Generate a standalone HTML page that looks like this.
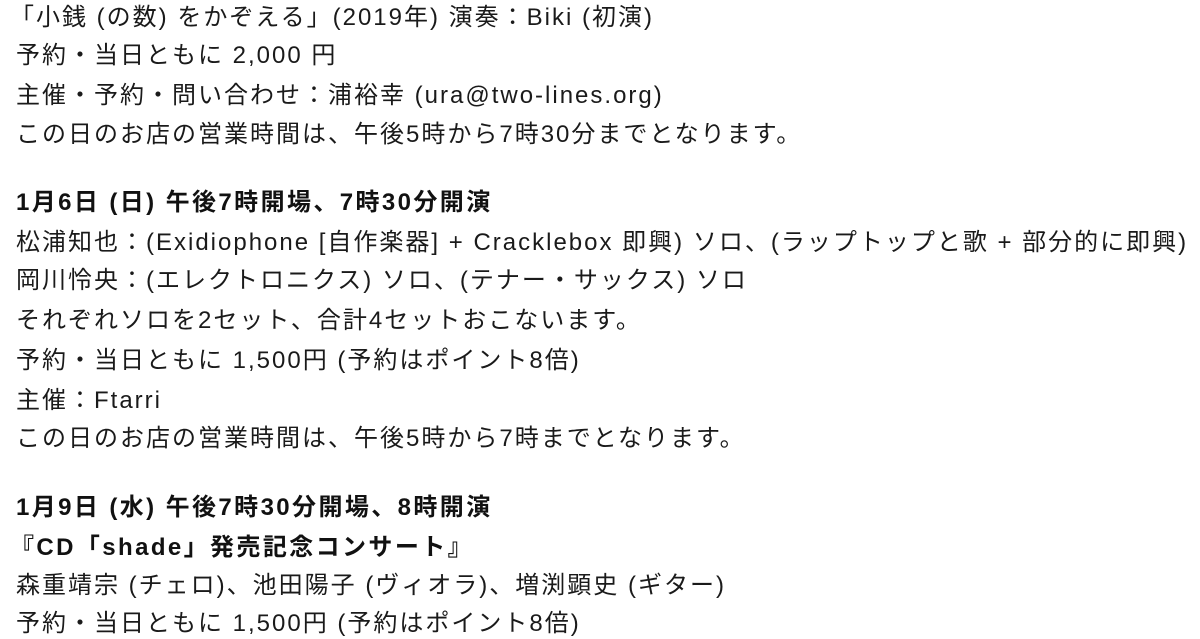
<!DOCTYPE html>
<html><head><meta charset="utf-8"><style>
html,body{margin:0;padding:0;background:#fff;width:1200px;height:630px;overflow:hidden}
.l{position:absolute;left:16px;white-space:nowrap;font-family:"Liberation Sans","Noto Sans CJK JP",sans-serif;font-size:24px;line-height:30px;color:#1a1a1a;letter-spacing:2px}
.b{font-weight:bold;color:#111;letter-spacing:2.4px}
</style></head><body>
<div class="l" style="top:3px;left:10px">「小銭 (の数) をかぞえる」(2019年) 演奏：Biki (初演)</div>
<div class="l" style="top:41px">予約・当日ともに 2,000 円</div>
<div class="l" style="top:81px">主催・予約・問い合わせ：浦裕幸 (ura@two-lines.org)</div>
<div class="l" style="top:120px">この日のお店の営業時間は、午後5時から7時30分までとなります。</div>
<div class="l b" style="top:188px">1月6日 (日) 午後7時開場、7時30分開演</div>
<div class="l" style="top:228px">松浦知也：(Exidiophone [自作楽器] + Cracklebox 即興) ソロ、(ラップトップと歌 + 部分的に即興)</div>
<div class="l" style="top:266px">岡川怜央：(エレクトロニクス) ソロ、(テナー・サックス) ソロ</div>
<div class="l" style="top:306px">それぞれソロを2セット、合計4セットおこないます。</div>
<div class="l" style="top:346px">予約・当日ともに 1,500円 (予約はポイント8倍)</div>
<div class="l" style="top:386px">主催：Ftarri</div>
<div class="l" style="top:424px">この日のお店の営業時間は、午後5時から7時までとなります。</div>
<div class="l b" style="top:493px">1月9日 (水) 午後7時30分開場、8時開演</div>
<div class="l b" style="top:533px;left:10px">『CD「shade」発売記念コンサート』</div>
<div class="l" style="top:571px">森重靖宗 (チェロ)、池田陽子 (ヴィオラ)、増渕顕史 (ギター)</div>
<div class="l" style="top:609px">予約・当日ともに 1,500円 (予約はポイント8倍)</div>
</body></html>
